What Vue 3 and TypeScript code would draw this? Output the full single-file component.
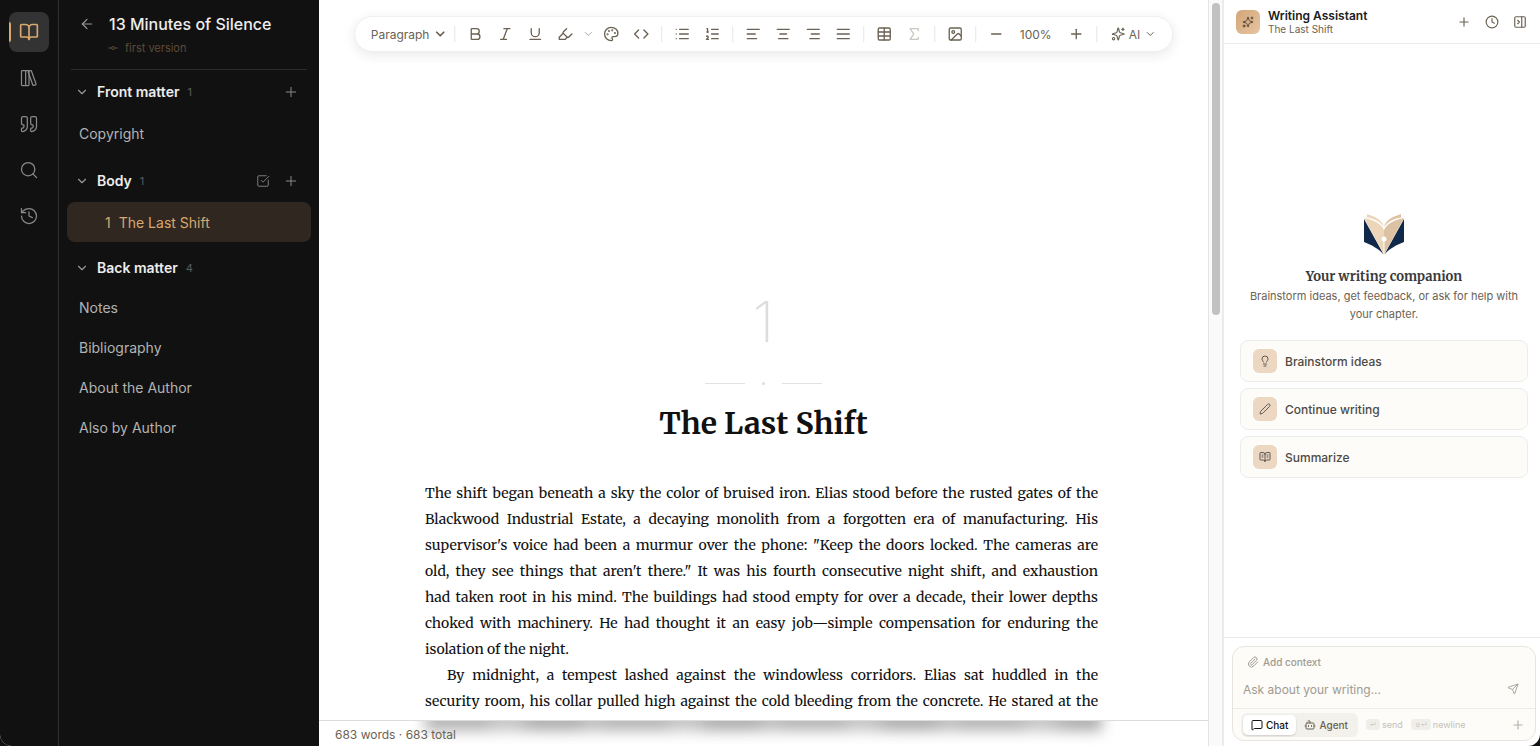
<script setup lang="ts">
import { ref } from 'vue'

type Shape = { d: string[]; c?: number[][] }

const icons: Record<string, Shape> = {
  book: { d: ['M12 7v14', 'M3 18a1 1 0 0 1-1-1V4a1 1 0 0 1 1-1h5a4 4 0 0 1 4 4 4 4 0 0 1 4-4h5a1 1 0 0 1 1 1v13a1 1 0 0 1-1 1h-6a3 3 0 0 0-3 3 3 3 0 0 0-3-3z'] },
  library: { d: ['M4 3h3a1 1 0 0 1 1 1v16a1 1 0 0 1-1 1H4a1 1 0 0 1-1-1V4a1 1 0 0 1 1-1z', 'M8 3h3a1 1 0 0 1 1 1v16a1 1 0 0 1-1 1H8', 'M20.4 18.9c.2.5-.1 1.1-.6 1.3l-1.9.7c-.5.2-1.1-.1-1.3-.6L11.1 5.1c-.2-.5.1-1.1.6-1.3l1.9-.7c.5-.2 1.1.1 1.3.6Z'] },
  quote: { d: ['M16 3a2 2 0 0 0-2 2v6a2 2 0 0 0 2 2 1 1 0 0 1 1 1v1a2 2 0 0 1-2 2 1 1 0 0 0-1 1v2a1 1 0 0 0 1 1 6 6 0 0 0 6-6V5a2 2 0 0 0-2-2z', 'M5 3a2 2 0 0 0-2 2v6a2 2 0 0 0 2 2 1 1 0 0 1 1 1v1a2 2 0 0 1-2 2 1 1 0 0 0-1 1v2a1 1 0 0 0 1 1 6 6 0 0 0 6-6V5a2 2 0 0 0-2-2z'] },
  search: { d: ['m21 21-4.3-4.3'], c: [[11, 11, 8]] },
  history: { d: ['M3 12a9 9 0 1 0 9-9 9.75 9.75 0 0 0-6.74 2.74L3 8', 'M3 3v5h5', 'M12 7v5l4 2'] },
  back: { d: ['m12 19-7-7 7-7', 'M19 12H5'] },
  commit: { d: ['M3 12h6', 'M15 12h6'], c: [[12, 12, 3]] },
  down: { d: ['m6 9 6 6 6-6'] },
  plus: { d: ['M5 12h14', 'M12 5v14'] },
  minus: { d: ['M5 12h14'] },
  check: { d: ['M21 10.5V19a2 2 0 0 1-2 2H5a2 2 0 0 1-2-2V5a2 2 0 0 1 2-2h12.5', 'm9 11 3 3L22 4'] },
  bold: { d: ['M6 12h9a4 4 0 0 1 0 8H7a1 1 0 0 1-1-1V5a1 1 0 0 1 1-1h7a4 4 0 0 1 0 8'] },
  italic: { d: ['M19 4h-9', 'M14 20H5', 'M15 4 9 20'] },
  underline: { d: ['M6 4v6a6 6 0 0 0 12 0V4', 'M4 20h16'] },
  highlight: { d: ['m9 11-6 6v3h9l3-3', 'm22 12-4.6 4.6a2 2 0 0 1-2.8 0l-5.2-5.2a2 2 0 0 1 0-2.8L14 4'] },
  palette: { d: ['M12 22a1 1 0 0 1 0-20 10 9 0 0 1 10 9 5 5 0 0 1-5 5h-2.25a1.75 1.75 0 0 0-1.4 2.8l.3.4a1.75 1.75 0 0 1-1.4 2.8z'], c: [[13.5, 6.5, 0.6], [17.5, 10.5, 0.6], [6.5, 12.5, 0.6], [8.5, 7.5, 0.6]] },
  code: { d: ['m16 18 6-6-6-6', 'm8 6-6 6 6 6'] },
  list: { d: ['M3 5h.01', 'M3 12h.01', 'M3 19h.01', 'M8 5h13', 'M8 12h13', 'M8 19h13'] },
  ordered: { d: ['M11 5h10', 'M11 12h10', 'M11 19h10', 'M4 4h1v5', 'M4 9h2', 'M6.5 20H3.4c0-1 2.6-1.925 2.6-3.5a1.5 1.5 0 0 0-2.6-1.02'] },
  left: { d: ['M21 5H3', 'M15 12H3', 'M17 19H3'] },
  center: { d: ['M21 5H3', 'M17 12H7', 'M19 19H5'] },
  right: { d: ['M21 5H3', 'M21 12H9', 'M21 19H7'] },
  justify: { d: ['M3 5h18', 'M3 12h18', 'M3 19h18'] },
  table: { d: ['M5 3h14a2 2 0 0 1 2 2v14a2 2 0 0 1-2 2H5a2 2 0 0 1-2-2V5a2 2 0 0 1 2-2z', 'M3 9h18', 'M3 15h18', 'M12 3v18'] },
  sigma: { d: ['M18 7V5a1 1 0 0 0-1-1H6.5a.5.5 0 0 0-.4.8l4.5 6a2 2 0 0 1 0 2.4l-4.5 6a.5.5 0 0 0 .4.8H17a1 1 0 0 0 1-1v-2'] },
  image: { d: ['M5 3h14a2 2 0 0 1 2 2v14a2 2 0 0 1-2 2H5a2 2 0 0 1-2-2V5a2 2 0 0 1 2-2z', 'm21 15-3.1-3.1a2 2 0 0 0-2.8 0L6 21'], c: [[9, 9, 2]] },
  sparkles: { d: ['M9.9 15.5A2 2 0 0 0 8.5 14.1l-6.1-1.6a.5.5 0 0 1 0-1L8.5 9.9A2 2 0 0 0 9.9 8.5l1.6-6.1a.5.5 0 0 1 1 0L14.1 8.5A2 2 0 0 0 15.5 9.9l6.1 1.6a.5.5 0 0 1 0 1L15.5 14.1a2 2 0 0 0-1.4 1.4l-1.6 6.1a.5.5 0 0 1-1 0z', 'M20 2v4', 'M22 4h-4'], c: [[4, 20, 2]] },
  clock: { d: ['M12 6v6l4 2'], c: [[12, 12, 10]] },
  panel: { d: ['M5 3h14a2 2 0 0 1 2 2v14a2 2 0 0 1-2 2H5a2 2 0 0 1-2-2V5a2 2 0 0 1 2-2z', 'M15 3v18', 'm8 9 3 3-3 3'] },
  bulb: { d: ['M15 14c.2-1 .7-1.7 1.5-2.5 1-.9 1.5-2.2 1.5-3.5A6 6 0 0 0 6 8c0 1 .2 2.2 1.5 3.5.7.7 1.3 1.5 1.5 2.5', 'M9 18h6', 'M10 22h4'] },
  pencil: { d: ['M21.2 6.8a1 1 0 0 0-4-4L3.8 16.2a2 2 0 0 0-.5.8L2 21.4a.5.5 0 0 0 .6.6l4.4-1.3a2 2 0 0 0 .8-.5z'] },
  reader: { d: ['M12 21V7', 'M16 12h2', 'M16 8h2', 'M6 12h2', 'M6 8h2', 'M3 18a1 1 0 0 1-1-1V4a1 1 0 0 1 1-1h5a4 4 0 0 1 4 4 4 4 0 0 1 4-4h5a1 1 0 0 1 1 1v13a1 1 0 0 1-1 1h-6a3 3 0 0 0-3 3 3 3 0 0 0-3-3z'] },
  clip: { d: ['m16 6-8.4 8.6a2 2 0 0 0 2.8 2.8l8.4-8.6a4 4 0 1 0-5.7-5.7l-8.4 8.6a6 6 0 1 0 8.5 8.5l8.4-8.6'] },
  send: { d: ['M14.5 21.7a.5.5 0 0 0 .9 0l6.5-19a.5.5 0 0 0-.6-.6l-19 6.5a.5.5 0 0 0 0 .9l7.9 3.2a2 2 0 0 1 1.1 1.1z', 'm21.9 2.1-10.9 10.9'] },
  chat: { d: ['M22 17a2 2 0 0 1-2 2H6.8a2 2 0 0 0-1.4.6l-2.2 2.2A.7.7 0 0 1 2 21.3V5a2 2 0 0 1 2-2h16a2 2 0 0 1 2 2z'] },
  bot: { d: ['M12 8V4H8', 'M6 8h12a2 2 0 0 1 2 2v8a2 2 0 0 1-2 2H6a2 2 0 0 1-2-2v-8a2 2 0 0 1 2-2z', 'M2 14h2', 'M20 14h2', 'M15 13v2', 'M9 13v2'] },
}

const Icon = (props: { name: string; size?: number; weight?: number }) =>
  h(
    'svg',
    {
      viewBox: '0 0 24 24',
      width: props.size ?? 16,
      height: props.size ?? 16,
      fill: 'none',
      stroke: 'currentColor',
      'stroke-width': props.weight ?? 2,
      'stroke-linecap': 'round',
      'stroke-linejoin': 'round',
      'aria-hidden': 'true',
    },
    [
      ...icons[props.name].d.map((d) => h('path', { d })),
      ...(icons[props.name].c ?? []).map(([cx, cy, r]) => h('circle', { cx, cy, r })),
    ],
  )
Icon.props = ['name', 'size', 'weight']

const rail = [
  { icon: 'book', label: 'Manuscript' },
  { icon: 'library', label: 'Library' },
  { icon: 'quote', label: 'Citations' },
  { icon: 'search', label: 'Search' },
  { icon: 'history', label: 'History' },
]

const tools = [
  ['bold', 'italic', 'underline', 'highlight', 'more', 'palette', 'code'],
  ['list', 'ordered'],
  ['left', 'center', 'right', 'justify'],
  ['table', 'sigma'],
  ['image'],
]

const backMatter = ['Notes', 'Bibliography', 'About the Author', 'Also by Author']

const paragraphs = [
  [
    'The shift began beneath a sky the color of bruised iron. Elias stood before the rusted gates of the',
    'Blackwood Industrial Estate, a decaying monolith from a forgotten era of manufacturing. His',
    'supervisor\'s voice had been a murmur over the phone: "Keep the doors locked. The cameras are',
    'old, they see things that aren\'t there." It was his fourth consecutive night shift, and exhaustion',
    'had taken root in his mind. The buildings had stood empty for over a decade, their lower depths',
    'choked with machinery. He had thought it an easy job—simple compensation for enduring the',
    'isolation of the night.',
  ],
  [
    'By midnight, a tempest lashed against the windowless corridors. Elias sat huddled in the',
    'security room, his collar pulled high against the cold bleeding from the concrete. He stared at the',
  ],
]

const suggestions = [
  { icon: 'bulb', label: 'Brainstorm ideas' },
  { icon: 'pencil', label: 'Continue writing' },
  { icon: 'reader', label: 'Summarize' },
]

const mode = ref('Chat')
const prompt = ref('')
</script>

<script lang="ts">
import { h } from 'vue'
</script>

<template>
  <div class="app">
    <nav class="rail" aria-label="Views">
      <button v-for="(r, i) in rail" :key="r.icon" :class="{ on: i === 0 }" :aria-label="r.label">
        <Icon :name="r.icon" :size="20" :weight="i === 0 ? 2 : 1.5" />
      </button>
    </nav>

    <aside class="outline">
      <header class="book">
        <button class="back" aria-label="Back"><Icon name="back" :weight="1.75" /></button>
        <div>
          <h1>13 Minutes of Silence</h1>
          <button class="version"><Icon name="commit" :size="12" />first version</button>
        </div>
      </header>

      <section class="group">
        <div class="group-head">
          <button class="fold"><Icon name="down" :size="14" /><b>Front matter</b><small>1</small></button>
          <button class="act" aria-label="Add front matter"><Icon name="plus" :weight="1.5" /></button>
        </div>
        <a href="#" class="entry">Copyright</a>
      </section>
      <section class="group">
        <div class="group-head">
          <button class="fold"><Icon name="down" :size="14" /><b>Body</b><small>1</small></button>
          <button class="act" aria-label="Select chapters"><Icon name="check" :size="14" :weight="1.5" /></button>
          <button class="act" aria-label="Add chapter"><Icon name="plus" :weight="1.5" /></button>
        </div>
        <a href="#" class="entry current"><span>1</span>The Last Shift</a>
      </section>
      <section class="group last">
        <div class="group-head">
          <button class="fold"><Icon name="down" :size="14" /><b>Back matter</b><small>4</small></button>
        </div>
        <a v-for="b in backMatter" :key="b" href="#" class="entry">{{ b }}</a>
      </section>
    </aside>

    <main class="editor">
      <div class="toolbar" role="toolbar" aria-label="Formatting">
        <label class="style-pick">
          <select aria-label="Text style"><option>Paragraph</option><option>Heading</option></select>
          <Icon name="down" :size="14" :weight="3" />
        </label>
        <template v-for="(g, gi) in tools" :key="gi">
          <i class="sep"></i>
          <button v-for="t in g" :key="t" class="tool" :class="t" :aria-label="t">
            <Icon :name="t === 'more' ? 'down' : t" :size="t === 'more' ? 12 : 16" />
          </button>
        </template>
        <i class="sep"></i>
        <button class="tool" aria-label="Zoom out"><Icon name="minus" /></button>
        <span class="zoom">100%</span>
        <button class="tool" aria-label="Zoom in"><Icon name="plus" /></button>
        <i class="sep"></i>
        <button class="ai"><Icon name="sparkles" :size="14" />AI<Icon name="down" :size="12" /></button>
      </div>

      <article class="page">
        <div class="number">1</div>
        <div class="ornament"><i></i><span></span><i></i></div>
        <h2>The Last Shift</h2>
        <div class="prose">
          <p v-for="(p, pi) in paragraphs" :key="pi">
            <span v-for="line in p" :key="line">{{ line }} </span>
          </p>
        </div>
      </article>

      <footer class="status">683 words · 683 total</footer>
    </main>

    <div class="track"><div class="thumb"></div></div>

    <aside class="assistant">
      <header class="a-head">
        <span class="badge"><Icon name="sparkles" :size="12" :weight="1.75" /></span>
        <div class="a-title"><h2>Writing Assistant</h2><p>The Last Shift</p></div>
        <button aria-label="New chat"><Icon name="plus" :size="14" /></button>
        <button aria-label="Chat history"><Icon name="clock" :size="14" /></button>
        <button aria-label="Collapse panel"><Icon name="panel" :size="14" /></button>
      </header>

      <div class="welcome">
        <svg class="logo" viewBox="0 0 42 44" width="42" height="44" aria-hidden="true">
          <path d="M1 6v23c8 3 15 7 20 13z" fill="#10294a" />
          <path d="M41 6v23c-8 3-15 7-20 13z" fill="#10294a" />
          <path d="M1 5c9 2 17 5 20 12v25z" fill="#ecd5b9" />
          <path d="M41 5c-9 2-17 5-20 12v25z" fill="#dcc1a3" />
          <path d="M4 1c9 3 15 6 17 13C17 9 12 6 4 5z" fill="#ecd5b9" />
          <path d="M38 1c-9 3-15 6-17 13 4-5 9-8 17-9z" fill="#dcc1a3" />
          <path d="M4 5c8 1 14 5 17 10 3-5 9-9 17-10" stroke="#fff" stroke-width="1" fill="none" />
          <path d="M21 26v17" stroke="#fff" stroke-width="1" />
          <circle cx="21" cy="26" r="2.5" fill="#fff" />
        </svg>
        <h3>Your writing companion</h3>
        <p>Brainstorm ideas, get feedback, or ask for help with your chapter.</p>
        <div class="cards">
          <button v-for="s in suggestions" :key="s.label">
            <span><Icon :name="s.icon" :size="12" :weight="1.75" /></span>{{ s.label }}
          </button>
        </div>
      </div>

      <form class="composer" @submit.prevent>
        <div class="box">
          <button type="button" class="context"><Icon name="clip" :size="12" />Add context</button>
          <div class="ask">
            <input v-model="prompt" aria-label="Message" placeholder="Ask about your writing..." />
            <button aria-label="Send"><Icon name="send" :size="12" :weight="1.75" /></button>
          </div>
          <div class="foot">
            <div class="modes">
              <button type="button" :class="{ on: mode === 'Chat' }" @click="mode = 'Chat'"><Icon name="chat" :size="12" />Chat</button>
              <button type="button" :class="{ on: mode === 'Agent' }" @click="mode = 'Agent'"><Icon name="bot" :size="12" />Agent</button>
            </div>
            <span class="hint"><kbd>↵</kbd>send</span>
            <span class="hint"><kbd>⇧↵</kbd>newline</span>
            <button type="button" class="add" aria-label="Attach"><Icon name="plus" :size="14" /></button>
          </div>
        </div>
      </form>
    </aside>
  </div>
</template>

<style>
body { overflow: hidden; background: #111; }
</style>

<style scoped>
* { box-sizing: border-box; }
.app { display: grid; grid-template-columns: 59px 260px 1fr 13px 318px; height: 100vh; overflow: hidden; background: #fff; border-radius: 0 0 12px 12px; font-family: Inter, "Liberation Sans", sans-serif; }
button { font: inherit; color: inherit; border: 0; background: none; padding: 0; display: flex; align-items: center; cursor: pointer; }
svg { flex: none; display: block; }
h1, h2, h3, p { margin: 0; }
a { text-decoration: none; color: inherit; }

.rail { background: #111; border-right: 1px solid #303030; padding-top: 12px; display: flex; flex-direction: column; align-items: center; gap: 6px; color: #8a8a8a; }
.rail button { width: 40px; height: 40px; justify-content: center; border-radius: 8px; position: relative; }
.rail .on { background: #333; color: #d9a86f; }
.rail .on::before { content: ""; position: absolute; left: 0; top: 10px; width: 2px; height: 20px; border-radius: 0 2px 2px 0; background: #d9a86f; }

.outline { background: #111; color: #b3b3b3; padding: 0 8px; min-width: 0; }
.book { display: flex; gap: 14px; margin: 0 4px; height: 70px; padding: 12px 0 0 8px; border-bottom: 1px solid #2c2c2c; }
.back { height: 24px; color: #999; }
.book h1 { font-size: 16px; line-height: 24px; font-weight: 500; color: #ededed; white-space: nowrap; }
.version { gap: 6px; font-size: 11px; line-height: 16px; margin-top: 4px; color: #5f4a35; margin-left: -2px; }
.group { margin-bottom: 6px; }
.group-head { display: flex; align-items: center; height: 43px; padding: 0 12px 0 8px; gap: 13px; }
.fold { flex: 1; font-size: 14px; color: #999; }
.fold b { font-weight: 600; color: #ededed; margin-left: 8px; }
.fold small { font-size: 11px; color: #5c5c5c; margin-left: 8px; }
.act { color: #8a8a8a; }
.entry { display: flex; align-items: center; height: 40px; padding: 0 12px; font-size: 14px; border-radius: 8px; }
.current { background: #302720; color: #d9a86f; padding-left: 38px; }
.current span { margin-right: 8px; }
.group.last .group-head { height: 39px; }

.editor { display: grid; grid-template-rows: 1fr auto; position: relative; overflow: hidden; min-width: 0; min-height: 0; border-right: 1px solid #e4e4e4; }
.toolbar { position: absolute; z-index: 2; top: 16px; left: 50%; transform: translateX(-50%); display: flex; align-items: center; height: 36px; padding: 0 16px; border: 1px solid #efefef; border-radius: 18px; background: #fff; color: #6b6253; box-shadow: 0 3px 12px rgba(30, 40, 50, 0.1); font-size: 12px; white-space: nowrap; }
.style-pick { display: flex; align-items: center; padding-right: 2px; }
.style-pick select { appearance: none; border: 0; background: none; font: inherit; color: inherit; padding: 0; width: 62px; }
.sep { width: 1px; height: 16px; background: #e6e6e6; margin: 0 5px; }
.tool { width: 30px; height: 28px; justify-content: center; }
.more { width: 16px; color: #aaa59c; }
.sigma { color: #c9c6c0; }
.zoom { width: 50px; text-align: center; }
.ai { gap: 4px; padding-left: 9px; }

.page { padding-top: 288px; color: #111; overflow: hidden; min-height: 0; }
.number { text-align: center; font-size: 56px; line-height: 68px; font-weight: 200; color: #ddd; }
.ornament { display: flex; justify-content: center; align-items: center; gap: 17px; height: 10px; margin-top: 22px; }
.ornament i { width: 40px; height: 1px; background: #e2e2e2; }
.ornament span { width: 3px; height: 3px; border-radius: 2px; background: #ddd; }
.page h2, .prose, .welcome h3 { font-family: Merriweather, "DejaVu Serif Condensed", "DejaVu Serif", serif; }
.page h2 { margin-top: 12px; text-align: center; font-size: 30px; line-height: 46px; font-weight: 700; }
.prose { padding: 0 110px 0 106px; margin-top: 34px; font-size: 14px; line-height: 26px; }
.prose span { display: block; text-align-last: justify; white-space: nowrap; }
.prose p:first-child span:last-child { text-align-last: left; }
.prose p + p span:first-child { padding-left: 22px; }
.status { position: relative; z-index: 0; overflow: hidden; height: 26px; padding: 0 16px; line-height: 27px; border-top: 1px solid #dcdcdc; background: #fff; font-size: 12px; color: #6b6253; }
.status::before { content: ""; position: absolute; z-index: -1; left: 106px; right: 106px; top: -10px; height: 20px; background: repeating-linear-gradient(90deg, #b4b4b4 0 60px, #c4c4c4 70px 90px, #acacac 110px 150px, #bebebe 164px 178px); filter: blur(7px); }

.track { background: #fafafa; padding: 3px 3px 0; }
.thumb { width: 8px; height: 312px; border-radius: 4px; background: #c1c1c1; }

.assistant { display: flex; flex-direction: column; border-left: 2px solid #ebebeb; min-width: 0; color: #6b6253; }
.a-head { display: flex; align-items: center; height: 44px; padding: 0 13px 0 12px; border-bottom: 1px solid #ebebeb; gap: 14px; }
.badge { width: 24px; height: 24px; border-radius: 6px; display: grid; place-items: center; background: linear-gradient(135deg, #d3a577, #e6c6a3); color: #4a3b2c; }
.a-title { flex: 1; margin-left: -6px; }
.a-title h2 { font-size: 12px; line-height: 15px; font-weight: 600; color: #1c1c1c; }
.a-title p { font-size: 10px; line-height: 12px; }
.welcome { flex: 1; display: flex; flex-direction: column; align-items: center; justify-content: center; padding: 10px 12px 0 16px; }
.welcome h3 { font-size: 13px; line-height: 20px; margin-top: 10px; font-weight: 700; color: #3a3a3a; }
.welcome p { font-size: 11px; line-height: 18px; text-align: center; padding: 0 8px; }
.cards { align-self: stretch; display: flex; flex-direction: column; gap: 6px; margin-top: 17px; }
.cards button { height: 42px; padding: 0 12px; gap: 8px; border: 1px solid #ececea; border-radius: 8px; background: #fdfcf8; font-size: 12px; font-weight: 500; color: #4d4a46; }
.cards span { width: 24px; height: 24px; border-radius: 6px; display: grid; place-items: center; background: #ecd7c2; }
.composer { border-top: 1px solid #ebebeb; padding: 8px 4px 5px 8px; }
.box { border: 1px solid #e8e5de; border-radius: 12px; background: #fdfcf8; }
.context { gap: 4px; margin: 7px 0 0 14px; font-size: 10px; line-height: 16px; font-weight: 500; color: #a09b92; }
.ask { display: flex; align-items: center; height: 38px; padding: 0 16px 0 10px; color: #a09b92; }
.ask input { flex: 1; min-width: 0; border: 0; padding: 0; background: none; font: inherit; font-size: 12px; outline: 0; color: #222; }
.ask input::placeholder { color: #a09b92; opacity: 1; }
.foot { display: flex; align-items: center; gap: 8px; height: 32px; padding: 0 10px 0 8px; border-top: 1px solid #eeece6; }
.modes { display: flex; padding: 2px; border-radius: 6px; background: #f3f1ec; }
.modes button { height: 20px; padding: 0 8px; gap: 3px; font-size: 10px; font-weight: 500; border-radius: 5px; }
.modes .on { background: #fff; color: #111; box-shadow: 0 1px 2px rgba(0, 0, 0, 0.15); }
.hint { display: flex; align-items: center; gap: 2px; font-size: 9px; color: #c4c0b8; }
.hint kbd { font: inherit; font-size: 6px; line-height: 11px; padding: 0 4px; border-radius: 3px; background: #f0eee9; }
.add { margin-left: auto; color: #b5b0a7; }
</style>
